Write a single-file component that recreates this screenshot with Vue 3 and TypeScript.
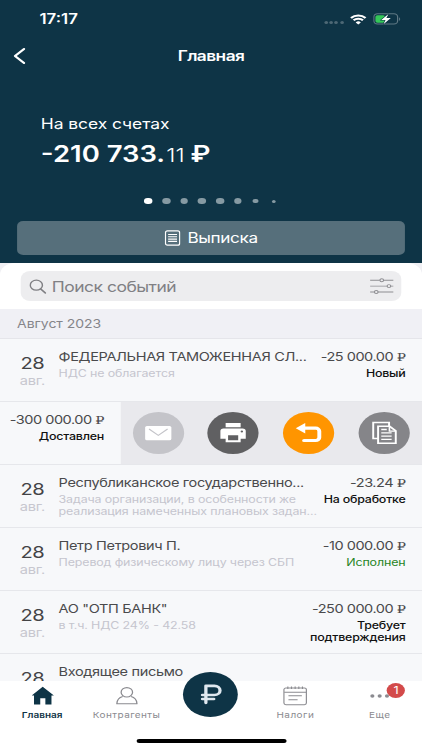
<script setup lang="ts">
interface Operation {
  title: string
  note: string[]
  amount: string
  status: string[]
  done?: boolean
  swiped?: boolean
}

const operations: Operation[] = [
  { title: 'ФЕДЕРАЛЬНАЯ ТАМОЖЕННАЯ СЛ...', note: ['НДС не облагается'], amount: '-25 000.00', status: ['Новый'] },
  { title: '', note: [], amount: '-300 000.00', status: ['Доставлен'], swiped: true },
  {
    title: 'Республиканское государственно...',
    note: ['Задача организации, в особенности же', 'реализация намеченных плановых задан...'],
    amount: '-23.24',
    status: ['На обработке'],
  },
  { title: 'Петр Петрович П.', note: ['Перевод физическому лицу через СБП'], amount: '-10 000.00', status: ['Исполнен'], done: true },
  { title: 'АО "ОТП БАНК"', note: ['в т.ч. НДС 24% - 42.58'], amount: '-250 000.00', status: ['Требует', 'подтверждения'] },
  { title: 'Входящее письмо', note: [], amount: '', status: [] },
]

const dots: string[] = ['on', '', '', '', '', '', 'small', 'tiny']
</script>

<template>
  <div class="screen">
    <header class="top">
      <div class="statusbar">
        <span class="clock">17:17</span>
        <div class="indicators">
          <span class="cell"><i></i><i></i><i></i><i></i></span>
          <svg class="wifi" viewBox="0 0 14 11" width="13.5" height="11">
            <path d="M.8 3.900A8.800 8.800 0 0 1 13.200 3.900M3 6.300a5.700 5.700 0 0 1 8 0" fill="none" stroke="#fff" stroke-width="2" />
            <path d="M7 10.800 4.800 8.500a3.100 3.100 0 0 1 4.400 0z" fill="#fff" />
          </svg>
          <svg class="battery" viewBox="0 0 23 12" width="23" height="12">
            <rect x=".5" y=".8" width="19.5" height="10.2" rx="3" fill="none" stroke="#5f7884" />
            <path d="M21.2 4.2v3.6c1.2-.5 1.2-3.100 0-3.600z" fill="#5f7884" />
            <rect x="1.8" y="2.200" width="8" height="7.500" rx="1.700" fill="#35c759" />
            <path d="M12.500.9 6.600 6.900h3.500L8.400 11.200l6-6.200h-3.600z" fill="#fff" stroke="#0e3446" stroke-width="1" paint-order="stroke" />
          </svg>
        </div>
      </div>
      <nav class="navbar">
        <svg class="back" viewBox="0 0 10 16" width="10" height="16">
          <path d="M8.700 1 1.300 8l7.400 7" fill="none" stroke="#fff" stroke-width="1.900" stroke-linecap="round" stroke-linejoin="round" />
        </svg>
        <h1>Главная</h1>
      </nav>
      <section class="balance">
        <p class="balance-label">На всех счетах</p>
        <p class="balance-sum">-210 733.<span>11</span> ₽</p>
      </section>
      <div class="dots">
        <span v-for="(d, i) in dots" :key="i"><i :class="d"></i></span>
      </div>
      <button class="statement">
        <svg viewBox="0 0 16 16" width="13" height="16" preserveAspectRatio="none">
          <rect x=".8" y=".8" width="14.400" height="14.400" rx="2" fill="none" stroke="#fff" stroke-width="1.300" />
          <path d="M3.500 4.500h9M3.500 6.800h9M3.500 9.100h9M3.500 11.400h9" stroke="#fff" stroke-width="1.100" />
        </svg>
        <span>Выписка</span>
      </button>
    </header>

    <div class="sheet-wrap">
      <div class="sheet">
        <div class="search">
          <svg viewBox="0 0 14 15" width="14" height="15">
            <circle cx="5.800" cy="6.200" r="5" fill="none" stroke="#808084" stroke-width="1.200" />
            <path d="m9.400 10 3.800 3.900" stroke="#808084" stroke-width="1.500" stroke-linecap="round" />
          </svg>
          <span>Поиск событий</span>
          <svg class="filter" viewBox="0 0 20 16" width="20" height="16">
            <g fill="#ededef" stroke="#8e8e92" stroke-width=".9">
              <path d="M.5 2.200h19M.5 8.100h19M.5 14h19" />
              <circle cx="10" cy="2.200" r="1.500" /><circle cx="15.900" cy="8.100" r="1.500" /><circle cx="5.500" cy="14" r="1.500" />
            </g>
          </svg>
        </div>
      </div>
    </div>
    <div class="month">Август 2023</div>

    <main class="list">
      <article v-for="(op, i) in operations" :key="i" class="row" :class="{ swiped: op.swiped }">
        <template v-if="!op.swiped">
          <div class="date"><span class="day">28</span><span class="mon">авг.</span></div>
          <div class="info">
            <div class="title">{{ op.title }}</div>
            <div v-for="n in op.note" :key="n" class="note">{{ n }}</div>
          </div>
        </template>
        <div class="side">
          <div v-if="op.amount" class="amount">{{ op.amount }} <span class="rub">₽</span></div>
          <div v-for="s in op.status" :key="s" class="state" :class="{ done: op.done }">{{ s }}</div>
        </div>
        <div v-if="op.swiped" class="actions">
          <button class="mail">
            <svg viewBox="0 0 42 42"><rect x="10" y="14" width="21.500" height="14.300" rx="1.500" fill="#fff" /><path d="m13.200 17 7.600 6.300L28.400 17" fill="none" stroke="#c4c4c9" stroke-width="1" /></svg>
          </button>
          <button class="print">
            <svg viewBox="0 0 42 42">
              <path d="M15 11h12.300v4.200H15zM13.400 16.400h15.500a2.600 2.600 0 0 1 2.600 2.600v7.700h-4.200v3.500H15v-3.500h-4.300V19a2.600 2.600 0 0 1 2.700-2.600z" fill="#fff" />
              <path d="M17 23.200h8.300v5H17z" fill="#606062" /><circle cx="28.300" cy="19.600" r="1" fill="#606062" />
            </svg>
          </button>
          <button class="undo">
            <svg viewBox="0 0 42 42"><path d="M17 16.200h9.800a3 3 0 0 1 3 3v6.300a3 3 0 0 1-3 3H17.300" fill="none" stroke="#fff" stroke-width="3.200" stroke-linecap="round" /><path d="M10.500 16.300 18.300 11v10.500z" fill="#fff" /></svg>
          </button>
          <button class="copy">
            <svg viewBox="0 0 42 42">
              <path d="M12 10.500h13v16H12z" fill="none" stroke="#fff" stroke-width="1.600" />
              <path d="M16 14.300h9.500l5 4.600v12.400H16z" fill="#858589" stroke="#fff" stroke-width="1.600" />
              <path d="M25.300 14.300v4.800h5.200M18.600 17.500h4.500M18.600 20.800h8.500M18.600 24.100h8.500M18.600 27.400h8.500" fill="none" stroke="#fff" stroke-width="1.300" />
            </svg>
          </button>
        </div>
      </article>
    </main>

    <footer class="tabs">
      <a class="tab active">
        <svg viewBox="0 0 20 20" width="20" height="20"><path d="M10 .8 19.200 9.600h-2v9h-5v-6.400H8v6.400H2.900v-9H1z" fill="#0e3446" /></svg>
        <span>Главная</span>
      </a>
      <a class="tab agents">
        <svg viewBox="0 0 20 20" width="20" height="20"><g fill="none" stroke="#8b8b90" stroke-width="1.050"><circle cx="10" cy="6.300" r="4.700" /><path d="M6.600 10.600C3.400 11.600 2 14 1.800 17.700h16.500c-.2-3.700-1.600-6.100-4.800-7.100" stroke-linejoin="round" /></g></svg>
        <span>Контрагенты</span>
      </a>
      <a class="tab pay">
        <span class="fab"><svg viewBox="0 0 20 22" width="20" height="22"><path d="M5.800 19.800V2.800h7a4.300 4.300 0 0 1 0 9.200H3M3 16h9.300" fill="none" stroke="#dfe8ef" stroke-width="2.700" stroke-linecap="round" stroke-linejoin="round" /></svg></span>
      </a>
      <a class="tab taxes">
        <svg viewBox="0 0 20 20" width="20" height="20"><g fill="none" stroke="#8b8b90" stroke-width=".95"><rect x=".8" y="2" width="18.400" height="16.700" rx="1.600" /><path d="M1 6.200h18M4.500 9.800h11M4.500 13.700h7.500" /><path d="M4 .6v2.500M7 .6v2.500M10 .6v2.500M13 .6v2.500M16 .6v2.500" /></g></svg>
        <span>Налоги</span>
      </a>
      <a class="tab more">
        <svg viewBox="0 0 20 20" width="20" height="20"><g fill="#8b8b90"><circle cx="4.300" cy="10" r="1.700" /><circle cx="10.300" cy="10" r="1.700" /><circle cx="16.300" cy="10" r="1.700" /></g></svg>
        <span>Еще</span>
        <b class="badge">1</b>
      </a>
      <div class="home-bar"></div>
    </footer>
  </div>
</template>

<style>
html,
body {
  margin: 0;
  overflow: hidden;
  background: #fff;
}
</style>

<style scoped>
.screen {
  width: 346px;
  height: 750px;
  transform: scaleX(1.21965);
  transform-origin: 0 0;
  display: flex;
  flex-direction: column;
  overflow: hidden;
  background: #fff;
  font-family: Inter, 'Liberation Sans', sans-serif;
  color: #4a4a4c;
}
.screen * { box-sizing: border-box; }
p, h1 { margin: 0; }
button { border: 0; padding: 0; font: inherit; color: inherit; }
svg { display: block; flex: none; }

.top {
  height: 263px;
  flex: none;
  display: flex;
  flex-direction: column;
  background: #0e3446;
  color: #fff;
}
.statusbar {
  height: 38px;
  display: flex;
  align-items: center;
  justify-content: space-between;
  padding: 0 17.500px 0 32.400px;
}
.clock { font-size: 13.800px; font-weight: 600; }
.indicators { display: flex; align-items: center; }
.cell { display: flex; gap: 1.300px; margin: 7px 5.500px 0 0; }
.cell i { width: 3px; height: 3px; border-radius: 50%; background: #4d6875; }
.wifi { margin-right: 5px; }
.navbar {
  height: 36px;
  display: grid;
  grid-template-columns: 22px 1fr 22px;
  align-items: center;
}
.back { margin-left: 11px; }
h1 { text-align: center; font-size: 14.200px; line-height: 20px; font-weight: 600; letter-spacing: -.45px; }
.balance { margin-top: 40px; padding-left: 33.500px; }
.balance-label { font-size: 14.300px; line-height: 20px; letter-spacing: -.05px; }
.balance-sum { margin-top: 8px; font-size: 22.500px; line-height: 24px; font-weight: 600; white-space: nowrap; }
.balance-sum span { font-size: 19px; font-weight: 300; margin: 0 -.800px 0 1px; }
.dots { flex: none; margin-top: 20px; height: 32px; display: flex; justify-content: center; padding-top: 7px; }
.dots span { width: 14.700px; height: 12px; display: flex; align-items: center; justify-content: center; }
.dots i { width: 6.600px; height: 6.600px; border-radius: 50%; background: #869aa3; }
.dots .on { background: #fff; }
.dots .small { width: 4.800px; height: 4.800px; }
.dots .tiny { width: 3px; height: 3px; }
.statement {
  height: 33.500px;
  flex: none;
  margin: 1px 13.700px 0;
  border-radius: 5px;
  background: #566f7b;
  display: flex;
  align-items: center;
  justify-content: center;
  gap: 6px;
  font-size: 14.100px;
  letter-spacing: -.32px;
}

.sheet-wrap { flex: none; background: #f0f0f4; }
.sheet { height: 46px; border-radius: 12px 12px 0 0; background: #fff; padding: 8px 17px 0; }
.search {
  height: 30px;
  border-radius: 8px;
  background: #ededef;
  display: flex;
  align-items: center;
  padding: 0 6.500px;
  font-size: 14.300px;
  letter-spacing: -.4px;
  color: #808084;
}
.search span { margin-left: 5px; flex: 1; white-space: nowrap; }
.month {
  height: 30px;
  flex: none;
  background: #f0f0f5;
  border-bottom: 1px solid #e5e5ea;
  padding-left: 14px;
  font-size: 11.500px;
  letter-spacing: -.05px;
  line-height: 31px;
  color: #85858a;
}

.list { flex: 1; min-height: 0; overflow: hidden; }
.row {
  height: 63px;
  display: flex;
  background: #f7f8fa;
  border-bottom: 1px solid #e6e7eb;
  padding: 10px 13.500px 0 0;
  white-space: nowrap;
}
.date { width: 48px; flex: none; padding: 5px 0 0 5.200px; display: flex; flex-direction: column; align-items: center; }
.day { font-size: 16.500px; line-height: 19px; letter-spacing: -.4px; color: #434345; }
.mon { font-size: 12px; line-height: 16px; letter-spacing: -.2px; color: #c7c7cf; }
.info { flex: 1; min-width: 0; }
.title, .amount { font-size: 11.900px; line-height: 16px; margin-bottom: 2px; letter-spacing: -.27px; }
.amount { letter-spacing: -.38px; }
.note, .state { font-size: 10.200px; line-height: 12px; letter-spacing: -.1px; }
.note { color: #c5c5ce; }
.side { flex: none; text-align: right; }
.state { font-weight: 500; color: #111; letter-spacing: -.18px; }
.state.done { color: #1f8423; font-weight: 400; letter-spacing: -.1px; }
.rub { font-family: 'Liberation Serif', 'DejaVu Serif', serif; }
.swiped { padding: 0; }
.swiped .side { width: 98.700px; padding: 10px 13.400px 0 0; }
.actions { flex: 1; display: grid; grid-template-columns: repeat(4, 1fr); place-items: center; background: #e9e9ed; }
.actions button { width: 42px; height: 42px; border-radius: 50%; }
.mail { background: #c4c4c9; }
.print { background: #606062; }
.undo { background: #ff9500; }
.copy { background: #858589; }

.tabs {
  height: 69.500px;
  flex: none;
  display: grid;
  grid-template-columns: repeat(5, 1fr);
  background: #fff;
  position: relative;
}
.tab { display: flex; flex-direction: column; align-items: center; padding-top: 5.500px; position: relative; }
.tab > span:not(.fab) { font-size: 8.200px; line-height: 12px; margin-top: 3px; color: #8b8b90; letter-spacing: .35px; }
.tab.active > span:not(.fab) { color: #0e3446; font-weight: 600; letter-spacing: 0; }
.fab {
  width: 45px;
  height: 45px;
  flex: none;
  margin-top: -14.500px;
  border-radius: 50%;
  background: #0e3446;
  display: flex;
  align-items: center;
  justify-content: center;
}
.badge {
  position: absolute;
  left: 40.500px;
  top: 2px;
  width: 15px;
  height: 15px;
  border-radius: 50%;
  background: #d34a4a;
  color: #fff;
  font-size: 10.500px;
  line-height: 15px;
  font-weight: 400;
  text-align: center;
}
.home-bar { position: absolute; left: 111.500px; bottom: 7px; width: 123.500px; height: 4px; border-radius: 2px; background: #000; }
</style>
